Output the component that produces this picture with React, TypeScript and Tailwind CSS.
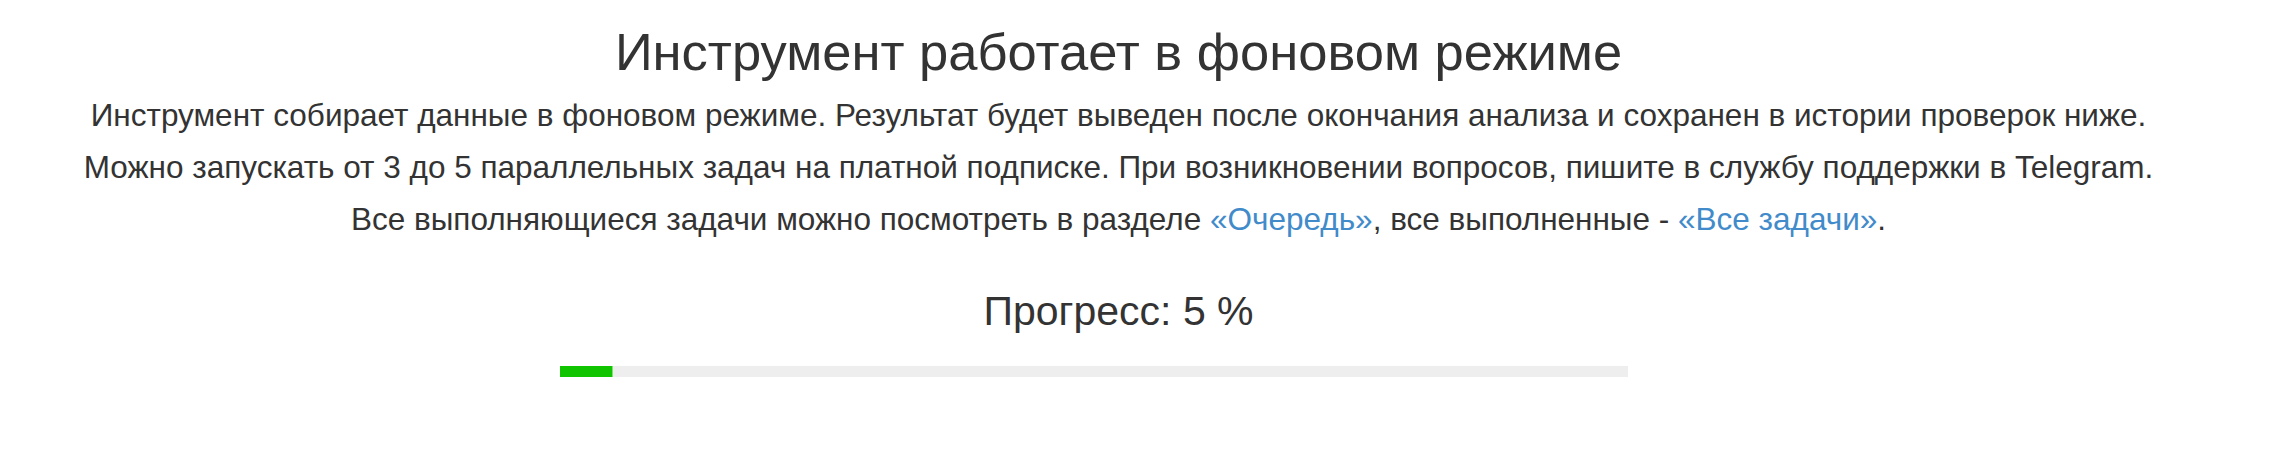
export default function App() {
  const progress = 5;

  return (
    <div className="w-[2237px] bg-white text-[#333333] font-['Liberation_Sans',Arial,sans-serif] text-center">
      <h1 className="pt-[23px] text-[52.5px] leading-[57px] font-normal">Инструмент работает в фоновом режиме</h1>

      <div className="mt-[9px] text-[31.5px] leading-[52px] whitespace-nowrap">
        <p>Инструмент собирает данные в фоновом режиме. Результат будет выведен после окончания анализа и сохранен в истории проверок ниже.</p>
        <p>Можно запускать от 3 до 5 параллельных задач на платной подписке. При возникновении вопросов, пишите в службу поддержки в Telegram.</p>
        <p>
          Все выполняющиеся задачи можно посмотреть в разделе{' '}
          <a href="#" className="text-[#428bca]">«Очередь»</a>, все выполненные -{' '}
          <a href="#" className="text-[#428bca]">«Все задачи»</a>.
        </p>
      </div>

      <div className="mt-[45px] text-[41px] leading-[43px]">Прогресс: {progress} %</div>

      <div className="mt-[33px] ml-[560px] w-[1068px] h-[11px] bg-[#eeeeee] flex">
        <div className="h-full bg-[#10c400] border-r border-[#7fe06f]" style={{ width: `${progress}%` }} />
      </div>

      <div className="h-[78px]" />
    </div>
  );
}
